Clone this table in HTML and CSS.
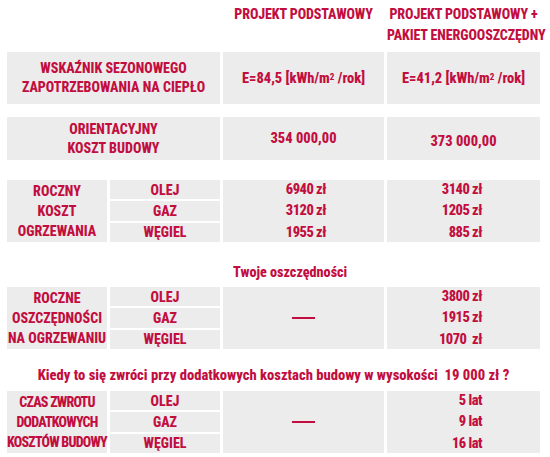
FILE: index.html
```html
<!DOCTYPE html>
<html lang="pl">
<head>
    <meta charset="UTF-8">
    <meta name="viewport" content="width=device-width, initial-scale=1.0">
    <title>Porównanie kosztów</title>
    <link rel="stylesheet" href="styles.css">
</head>
<body>
    <div class="page">
        <div class="row head">
            <div></div>
            <div class="head-title">PROJEKT PODSTAWOWY</div>
            <div class="head-title">PROJEKT PODSTAWOWY +<br>PAKIET ENERGOOSZCZĘDNY</div>
        </div>

        <div class="row sec-index">
            <div class="cell label">WSKAŹNIK SEZONOWEGO<br>ZAPOTRZEBOWANIA NA CIEPŁO</div>
            <div class="cell value">E=84,5 [kWh/m<sup>2</sup>&nbsp;/rok]</div>
            <div class="cell value">E=41,2 [kWh/m<sup>2</sup>&nbsp;/rok]</div>
        </div>

        <div class="row sec-cost">
            <div class="cell label">ORIENTACYJNY<br>KOSZT BUDOWY</div>
            <div class="cell value">354 000,00</div>
            <div class="cell value low">373 000,00</div>
        </div>

        <div class="row sec-split sec-heating">
            <div class="split">
                <div class="cell label">ROCZNY<br>KOSZT<br>OGRZEWANIA</div>
                <div class="fuels">
                    <div class="cell fuel">OLEJ</div>
                    <div class="cell fuel">GAZ</div>
                    <div class="cell fuel">WĘGIEL</div>
                </div>
            </div>
            <div class="cell amounts">
                <span>6940 zł</span>
                <span>3120 zł</span>
                <span>1955 zł</span>
            </div>
            <div class="cell amounts">
                <span>3140 zł</span>
                <span>1205 zł</span>
                <span>885 zł</span>
            </div>
        </div>

        <div class="section-title savings-title">Twoje oszczędności</div>

        <div class="row sec-split">
            <div class="split">
                <div class="cell label">ROCZNE<br>OSZCZĘDNOŚCI<br>NA OGRZEWANIU</div>
                <div class="fuels">
                    <div class="cell fuel">OLEJ</div>
                    <div class="cell fuel">GAZ</div>
                    <div class="cell fuel">WĘGIEL</div>
                </div>
            </div>
            <div class="cell dash-cell"><span class="dash"></span></div>
            <div class="cell amounts">
                <span>3800 zł</span>
                <span>1915 zł</span>
                <span>1070&nbsp; zł</span>
            </div>
        </div>

        <div class="section-title return-title">Kiedy to się zwróci przy dodatkowych kosztach budowy w wysokości&nbsp; 19 000 zł ?</div>

        <div class="row sec-split">
            <div class="split">
                <div class="cell label tight">CZAS ZWROTU<br>DODATKOWYCH<br>KOSZTÓW BUDOWY</div>
                <div class="fuels">
                    <div class="cell fuel">OLEJ</div>
                    <div class="cell fuel">GAZ</div>
                    <div class="cell fuel">WĘGIEL</div>
                </div>
            </div>
            <div class="cell dash-cell"><span class="dash"></span></div>
            <div class="cell amounts">
                <span>5 lat</span>
                <span>9 lat</span>
                <span>16 lat</span>
            </div>
        </div>
    </div>
</body>
</html>
```

FILE: styles.css
```css
body {
    margin: 0;
    background: #ffffff;
    color: #c20e3f;
    font-family: "Roboto Condensed", "Open Sans", sans-serif;
    font-stretch: 75%;
    font-weight: 800;
    font-size: 14px;
}

.page {
    width: 533px;
    padding-left: 7px;
}

.row {
    display: grid;
    grid-template-columns: 213px 161px 153px;
    column-gap: 3px;
}

.cell {
    background: #ececec;
}

/* header */
.head {
    height: 52px;
}

.head-title {
    text-align: center;
    white-space: nowrap;
    padding-top: 4px;
    line-height: 21px;
    font-size: 14px;
    letter-spacing: -0.1px;
}

/* simple rows */
.label {
    display: flex;
    align-items: center;
    justify-content: center;
    text-align: center;
    line-height: 19px;
}

.value {
    display: flex;
    align-items: center;
    justify-content: center;
    font-size: 14.5px;
    white-space: nowrap;
}

.value sup {
    font-size: 9px;
    line-height: 0;
    position: relative;
    top: -1px;
}

.value.low {
    padding-top: 5px;
}

.sec-index {
    height: 52px;
}

.sec-cost {
    height: 43px;
    margin-top: 13px;
}

/* rows split by fuel */
.sec-split {
    height: 62px;
}

.sec-heating {
    margin-top: 20px;
}

.split {
    display: grid;
    grid-template-columns: 100px 110px;
    column-gap: 3px;
}

.split .label {
    line-height: 20px;
}

.label.tight {
    letter-spacing: -0.8px;
}

.fuels {
    display: grid;
    grid-template-rows: 1fr 1fr 1fr;
    row-gap: 2px;
}

.fuel {
    display: flex;
    align-items: center;
    justify-content: center;
    font-size: 14px;
}

.amounts {
    display: grid;
    grid-template-rows: 1fr 1fr 1fr;
    row-gap: 2px;
    align-items: center;
    text-align: right;
    padding-right: 58px;
    font-size: 14.5px;
    letter-spacing: -0.5px;
}

.dash-cell {
    display: flex;
    align-items: center;
    justify-content: center;
}

.dash {
    display: block;
    width: 23px;
    height: 2px;
    background: #c20e3f;
}

/* section titles */
.section-title {
    display: flex;
    align-items: center;
    box-sizing: border-box;
}

.savings-title {
    height: 45px;
    padding-top: 14px;
    padding-left: 226px;
    font-size: 14.2px;
}

.return-title {
    height: 42px;
    padding-top: 10px;
    justify-content: center;
    font-size: 14.6px;
}
```
